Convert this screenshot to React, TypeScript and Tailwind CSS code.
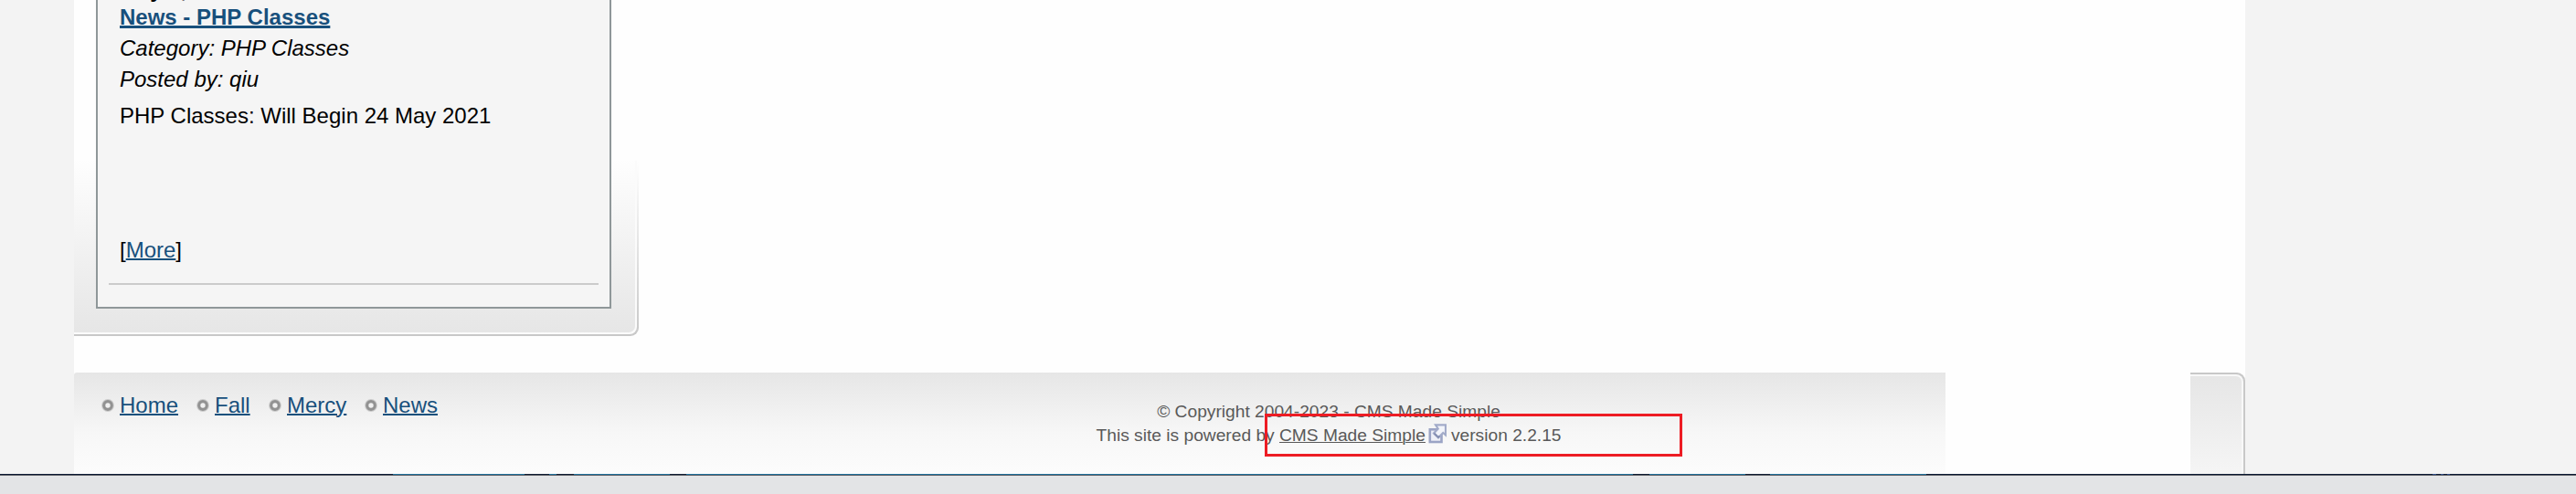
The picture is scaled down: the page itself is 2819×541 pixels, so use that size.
const segs: [number, number, string][] = [
  [0, 430, '#0b1933'], [430, 144, '#20709a'], [574, 27, '#101c34'], [601, 8, '#20709a'], [609, 19, '#101c34'],
  [628, 105, '#20709a'], [733, 18, '#101c34'], [751, 1036, '#20709a'], [1787, 18, '#101c34'], [1805, 105, '#20709a'],
  [1910, 27, '#101c34'], [1937, 171, '#20709a'], [2108, 554, '#0b1933'], [2662, 4, '#2b4a86'], [2666, 5, '#0b1933'],
  [2671, 3, '#2b4a86'], [2674, 4, '#0b1933'], [2678, 3, '#2b4a86'], [2681, 138, '#0b1933'],
];

const Bullet = () => (
  <svg width="14" height="14" viewBox="0 0 14 14" className="mr-[6px] block shrink-0">
    <circle cx="7" cy="7" r="6.2" fill="none" stroke="#999" strokeOpacity=".4" strokeWidth="1.4" />
    <circle cx="7" cy="7" r="4.3" fill="#f0f0f0" stroke="#929292" strokeWidth="3.2" />
  </svg>
);

const NavItem = ({ label, className }: { label: string; className: string }) => (
  <li className={`flex items-center ${className}`}>
    <Bullet />
    <a className="text-[#18507c] underline decoration-2 underline-offset-1">{label}</a>
  </li>
);

const ExternalIcon = () => (
  <svg width="20" height="22" viewBox="0 0 20 22" className="ml-[3px] mr-[5px] inline-block align-[-3px]">
    <rect x="1.8" y="6.300" width="12.700" height="13.700" fill="#eef0f7" stroke="#9ba4c5" strokeWidth="2.6" />
    <path d="M8 1.300H19V12.500L16.200 10L11 15.200L6 10.500L10.700 5.500Z" fill="#f2f4fa" stroke="#a2abc9" strokeWidth="2.2" />
    <path d="M6.500 10.500L11 15L12.500 13.500" fill="none" stroke="#8791b3" strokeWidth="2.2" />
  </svg>
);

export default function App() {
  return (
    <div className="relative flex h-[541px] w-[2819px] flex-col overflow-hidden bg-[#f3f3f3] font-['Liberation_Sans',Arial,sans-serif] text-[24px] text-black">
      <div className="ml-[81px] flex h-[519px] w-[2376px] flex-col bg-[#fefefe]">
        <aside className="relative h-[368px] w-[618px] overflow-hidden rounded-br-[9px] pl-6">
          <div className="absolute inset-x-0 bottom-0 h-[190px] bg-linear-to-b from-[#fefefe] to-[#c8c8c8]" />
          <div className="absolute bottom-[2px] left-0 right-[2px] h-[190px] rounded-br-[8px] bg-[#fbfbfb]" />
          <div className="absolute bottom-[4px] left-0 right-[4px] h-[190px] rounded-br-[7px] bg-linear-to-b from-[#fefefe] to-[#e6e6e6]" />
          <div className="relative h-[338px] w-[564px] overflow-hidden border-2 border-t-0 border-[#8f9799] bg-[#f5f5f5] px-3">
            <div className="flex h-[312px] flex-col border-b-2 border-[#cbcbcb] pl-3">
              <div className="-mt-[25px] h-[27px] font-bold leading-[28px]">May 3, 2021</div>
              <a className="h-[34px] font-bold leading-[34px] text-[#18507c] underline decoration-[3px] underline-offset-1">News - PHP Classes</a>
              <div className="h-[34px] italic leading-[34px]">Category: PHP Classes</div>
              <div className="h-[34px] italic leading-[34px]">Posted by: qiu</div>
              <p className="mt-[6px] h-[34px] leading-[34px]">PHP Classes: Will Begin 24 May 2021</p>
              <p className="mt-[113px] h-[34px] leading-[34px]">[<a className="text-[#18507c] underline decoration-2 underline-offset-1">More</a>]</p>
            </div>
          </div>
        </aside>
        <footer className="mt-10 flex h-[111px]">
          <div className="flex w-[2048px] rounded-tl-[3px] bg-linear-to-b from-[#e6e6e6] via-[#f7f7f7] via-60% to-[#fcfcfc]">
            <ul className="flex h-[72px] w-[1118px] items-center pl-[30px]">
              <NavItem label="Home" className="w-[104px]" />
              <NavItem label="Fall" className="w-[79px]" />
              <NavItem label="Mercy" className="w-[105px]" />
              <NavItem label="News" className="w-[90px]" />
            </ul>
            <div className="w-[510px] pt-[30px] text-center text-[19.2px] leading-[26px] text-[#595959]">
              <p className="h-[26px] whitespace-nowrap">© Copyright 2004-2023 - CMS Made Simple</p>
              <p className="h-[26px] whitespace-nowrap">This site is powered by <a className="underline decoration-1 underline-offset-1">CMS Made Simple</a><ExternalIcon />version 2.2.15</p>
            </div>
          </div>
          <div className="ml-auto w-[60px] rounded-tr-[9px] bg-[#c8c8c8] pr-[2px] pt-[2px]">
            <div className="h-full rounded-tr-[8px] bg-[#f8f8f8] pr-[2px] pt-[2px]">
              <div className="h-full rounded-tr-[6px] bg-linear-to-b from-[#e6e6e6] to-[#f5f5f5]" />
            </div>
          </div>
        </footer>
      </div>
      <div className="flex h-px">
        {segs.map(([x, w, c]) => <div key={x} className="h-px shrink-0" style={{ width: w, background: c }} />)}
      </div>
      <div className="h-[21px] border-t border-[#5f6166] bg-[#e3e4e6]" />
      <div className="absolute left-[1384px] top-[453px] h-[47px] w-[457px] border-[3px] border-[#ed1c24]" />
    </div>
  );
}
